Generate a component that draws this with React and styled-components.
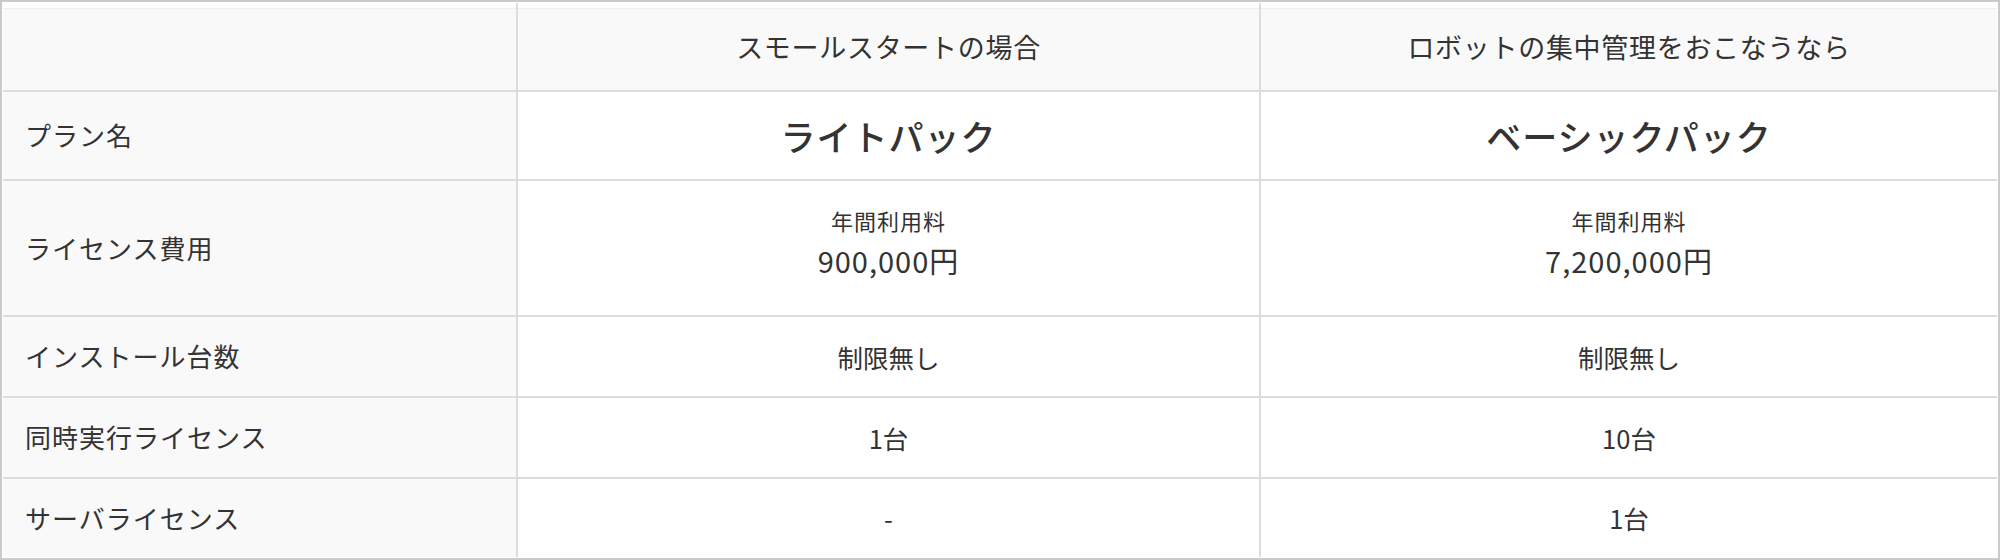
import React from "react";
import styled, { createGlobalStyle } from "styled-components";

const Global = createGlobalStyle`
  html, body { margin: 0; padding: 0; background: #fff; }
  body { font-family: "Noto Sans CJK JP", "Noto Sans", sans-serif; color: #333; }
`;

const Table = styled.div`
  box-sizing: border-box;
  width: 2000px;
  height: 560px;
  border: 2px solid #cacaca;
  padding: 1px;
  background: #fff;
`;

const Grid = styled.div`
  display: grid;
  grid-template-columns: 513px 741px 1fr;
  grid-template-rows: 87px 87px 134px 79px 79px 78px;
  gap: 2px;
  background: #dcdcdc;
  height: 100%;
`;

const Cell = styled.div`
  display: flex;
  flex-direction: column;
  justify-content: center;
  align-items: ${(p) => (p.$label ? "flex-start" : "center")};
  padding: ${(p) => (p.$label ? "0 0 0 22px" : "0")};
  background: ${(p) => (p.$shade ? "#f9f9f9" : "#fff")};
  font-size: ${(p) => (p.$head ? "27px" : "26px")};
  letter-spacing: ${(p) => (p.$head ? "0.7px" : p.$label ? "1px" : "0")};
  line-height: 1.4;
  color: #333;
  box-sizing: border-box;
  box-shadow: ${(p) => (p.$head ? "inset 0 5px 0 #fff, inset 0 6px 0 #efefef" : "none")};
`;

const PlanName = styled.span`
  font-size: 35px;
  font-weight: 500;
  letter-spacing: 1px;
`;

const FeeLabel = styled.span`
  font-size: 22px;
  letter-spacing: 1px;
  line-height: 1.3;
`;

const FeeValue = styled.span`
  font-size: 29px;
  letter-spacing: 1px;
  line-height: 1.5;
  margin-top: 4px;
  margin-bottom: 8px;
`;

const Value = styled.span`
  font-size: 25.5px;
`;

const rows = [
  { label: "インストール台数", a: "制限無し", b: "制限無し" },
  { label: "同時実行ライセンス", a: "1台", b: "10台" },
  { label: "サーバライセンス", a: "-", b: "1台" },
];

export default function App() {
  return (
    <>
      <Global />
      <Table>
        <Grid>
          <Cell $shade $head />
          <Cell $shade $head>スモールスタートの場合</Cell>
          <Cell $shade $head>ロボットの集中管理をおこなうなら</Cell>

          <Cell $shade $label>プラン名</Cell>
          <Cell><PlanName>ライトパック</PlanName></Cell>
          <Cell><PlanName>ベーシックパック</PlanName></Cell>

          <Cell $shade $label>ライセンス費用</Cell>
          <Cell>
            <FeeLabel>年間利用料</FeeLabel>
            <FeeValue>900,000円</FeeValue>
          </Cell>
          <Cell>
            <FeeLabel>年間利用料</FeeLabel>
            <FeeValue>7,200,000円</FeeValue>
          </Cell>

          {rows.map((r) => (
            <React.Fragment key={r.label}>
              <Cell $shade $label>{r.label}</Cell>
              <Cell><Value>{r.a}</Value></Cell>
              <Cell><Value>{r.b}</Value></Cell>
            </React.Fragment>
          ))}
        </Grid>
      </Table>
    </>
  );
}
